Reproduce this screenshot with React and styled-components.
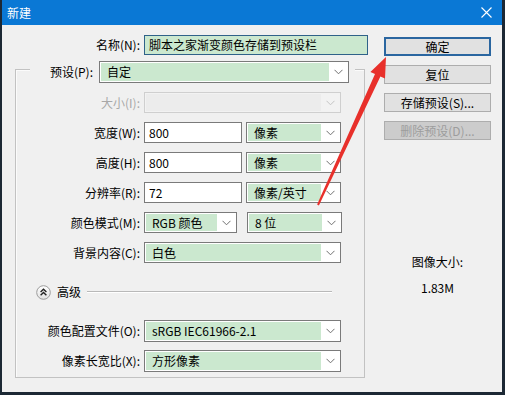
import React from 'react';
import styled, { createGlobalStyle } from 'styled-components';

const GlobalStyle = createGlobalStyle`
  html, body { margin: 0; padding: 0; background: #1c2834; }
  body {
    font-family: "Noto Sans CJK SC", "Microsoft YaHei", sans-serif;
    font-size: 12px;
    color: #000;
  }
  * { box-sizing: border-box; }
`;

const Window = styled.div`
  position: relative;
  margin-left: 2px;
  width: 500px;
  height: 392px;
  background: #f0f0f0;
  display: flex;
  flex-direction: column;
`;

const TitleBar = styled.div`
  height: 25px;
  flex: none;
  background: #0a78d5;
  color: #fff;
  display: flex;
  align-items: center;
  justify-content: space-between;
  padding: 0 10px 0 5px;
  font-size: 12px;
  line-height: 16px;
`;

const Body = styled.div`
  display: flex;
  padding: 10px 0 0 13px;
`;

const LeftCol = styled.div`
  width: 355px;
  display: flex;
  flex-direction: column;
`;

const FormRow = styled.div`
  display: flex;
  align-items: stretch;
  height: ${(p) => p.$h || 21}px;
  gap: ${(p) => p.$gap || 4}px;
  margin-top: ${(p) => p.$mt || 0}px;
`;

const Label = styled.div`
  width: ${(p) => p.$w}px;
  flex: none;
  text-align: right;
  white-space: nowrap;
  display: flex;
  align-items: center;
  justify-content: flex-end;
  line-height: 16px;
  color: ${(p) => (p.$disabled ? '#a8a8a8' : '#000')};
`;

const TextBox = styled.div`
  width: ${(p) => p.$w}px;
  flex: none;
  border: 1px solid ${(p) => (p.$focus ? '#2f6289' : '#7a7a7a')};
  background: ${(p) => (p.$green ? '#cbe8cf' : '#fff')};
  display: flex;
  align-items: center;
  padding-left: ${(p) => p.$pl || 4}px;
  line-height: 16px;
  white-space: nowrap;
  overflow: hidden;
`;

const Select = styled.div`
  width: ${(p) => p.$w}px;
  flex: none;
  border: 1px solid ${(p) => (p.$disabled ? '#cfcfcf' : '#7a7a7a')};
  background: ${(p) => (p.$disabled ? '#f2f2f2' : '#fff')};
  display: flex;
  padding: 1px;
`;

const SelectValue = styled.div`
  flex: 1;
  background: ${(p) => (p.$disabled ? '#ececec' : '#cbe8cf')};
  display: flex;
  align-items: center;
  padding-left: 6px;
  line-height: 16px;
  white-space: nowrap;
`;

const ArrowBox = styled.div`
  width: 18px;
  flex: none;
  display: flex;
  align-items: center;
  justify-content: center;
`;

const GroupBox = styled.div`
  margin-top: 14px;
  width: 350px;
  border: 1px solid #c2c2c2;
  box-shadow: inset 1px 1px 0 #fbfbfb;
  display: flex;
  flex-direction: column;
  padding-bottom: 5px;
`;

const PresetRow = styled(FormRow)`
  margin-top: -9px;
  margin-left: 14px;
  width: 325px;
  padding-right: 6px;
  background: #f0f0f0;
`;

const AdvancedRow = styled.div`
  display: flex;
  align-items: center;
  height: 16px;
  margin: 21px 32px 0 20px;
  gap: 6px;
  line-height: 16px;
`;

const Rule = styled.div`
  flex: 1;
  height: 2px;
  border-top: 1px solid #b9b9b9;
  border-bottom: 1px solid #ffffff;
  margin-left: 0;
`;

const RightCol = styled.div`
  width: 107px;
  margin-left: 14px;
  padding-top: 2px;
  display: flex;
  flex-direction: column;
  gap: 9px;
`;

const Button = styled.div`
  height: 19px;
  border: ${(p) => (p.$default ? '2px solid #2a66a0' : '1px solid #adadad')};
  background: ${(p) => (p.$disabled ? '#cccccc' : '#e1e1e1')};
  color: ${(p) => (p.$disabled ? '#9d9d9d' : '#000')};
  display: flex;
  align-items: center;
  justify-content: center;
  line-height: 16px;
  white-space: nowrap;
`;

const ImageSize = styled.div`
  margin-top: 105px;
  display: flex;
  flex-direction: column;
  align-items: center;
  gap: 10px;
  line-height: 16px;
`;

const Overlay = styled.svg`
  position: absolute;
  left: 0;
  top: 0;
  width: 500px;
  height: 392px;
  pointer-events: none;
`;

const Chevron = ({ disabled }) => (
  <svg width="9" height="6" viewBox="0 0 9 6">
    <polyline
      points="0.5,0.8 4.5,4.8 8.5,0.8"
      fill="none"
      stroke={disabled ? '#c4c4c4' : '#707070'}
      strokeWidth="1"
    />
  </svg>
);

const Dropdown = ({ w, value, disabled }) => (
  <Select $w={w} $disabled={disabled}>
    <SelectValue $disabled={disabled}>{value}</SelectValue>
    <ArrowBox>
      <Chevron disabled={disabled} />
    </ArrowBox>
  </Select>
);

const CloseIcon = () => (
  <svg width="11" height="11" viewBox="0 0 11 11">
    <path d="M0.5 0.5 L10.5 10.5 M10.5 0.5 L0.5 10.5" stroke="#fff" strokeWidth="1.1" />
  </svg>
);

const CollapseIcon = () => (
  <svg width="15" height="15" viewBox="0 0 15 15">
    <defs>
      <linearGradient id="cg" x1="0" y1="0" x2="0" y2="1">
        <stop offset="0" stopColor="#ffffff" />
        <stop offset="1" stopColor="#e2e2e2" />
      </linearGradient>
    </defs>
    <circle cx="7.5" cy="7.5" r="6.8" fill="url(#cg)" stroke="#9c9c9c" strokeWidth="1" />
    <polyline points="4.6,7 7.5,4.3 10.4,7" fill="none" stroke="#222" strokeWidth="1.4" />
    <polyline points="4.6,10.2 7.5,7.5 10.4,10.2" fill="none" stroke="#222" strokeWidth="1.4" />
  </svg>
);

export default function App() {
  return (
    <>
      <GlobalStyle />
      <Window>
        <TitleBar>
          <span>新建</span>
          <CloseIcon />
        </TitleBar>
        <Body>
          <LeftCol>
            <FormRow $h={20}>
              <Label $w={125}>名称(N):</Label>
              <TextBox $w={224} $green $focus $pl={4}>脚本之家渐变颜色存储到预设栏</TextBox>
            </FormRow>
            <GroupBox>
              <PresetRow $h={22} $gap={6}>
                <Label $w={63}>预设(P):</Label>
                <Dropdown w={250} value="自定" />
              </PresetRow>
              <FormRow $mt={9}>
                <Label $w={124} $disabled>大小(I):</Label>
                <Dropdown w={197} value="" disabled />
              </FormRow>
              <FormRow $mt={9}>
                <Label $w={124}>宽度(W):</Label>
                <TextBox $w={98}>800</TextBox>
                <Dropdown w={95} value="像素" />
              </FormRow>
              <FormRow $mt={9}>
                <Label $w={124}>高度(H):</Label>
                <TextBox $w={98}>800</TextBox>
                <Dropdown w={95} value="像素" />
              </FormRow>
              <FormRow $mt={9}>
                <Label $w={124}>分辨率(R):</Label>
                <TextBox $w={98}>72</TextBox>
                <Dropdown w={95} value="像素/英寸" />
              </FormRow>
              <FormRow $mt={9} $gap={4}>
                <Label $w={124}>颜色模式(M):</Label>
                <Dropdown w={93} value="RGB 颜色" />
                <Spacer />
                <Dropdown w={95} value="8 位" />
              </FormRow>
              <FormRow $mt={9}>
                <Label $w={124}>背景内容(C):</Label>
                <Dropdown w={197} value="白色" />
              </FormRow>
              <AdvancedRow>
                <CollapseIcon />
                <span>高级</span>
                <Rule />
              </AdvancedRow>
              <FormRow $mt={20} $h={22}>
                <Label $w={124}>颜色配置文件(O):</Label>
                <Dropdown w={197} value="sRGB IEC61966-2.1" />
              </FormRow>
              <FormRow $mt={8} $h={22}>
                <Label $w={124}>像素长宽比(X):</Label>
                <Dropdown w={197} value="方形像素" />
              </FormRow>
            </GroupBox>
          </LeftCol>
          <RightCol>
            <Button $default>确定</Button>
            <Button>复位</Button>
            <Button>存储预设(S)...</Button>
            <Button $disabled>删除预设(D)...</Button>
            <ImageSize>
              <span>图像大小:</span>
              <span>1.83M</span>
            </ImageSize>
          </RightCol>
        </Body>
        <Overlay viewBox="0 0 500 392">
          <polygon
            points="315.1,204.6 373,73.95 368.4,71.9 384,57 383,78.5 378.4,76.45 316.9,205.4"
            fill="#e8302b"
          />
        </Overlay>
      </Window>
    </>
  );
}

const Spacer = styled.div`
  width: 2px;
  flex: none;
`;
